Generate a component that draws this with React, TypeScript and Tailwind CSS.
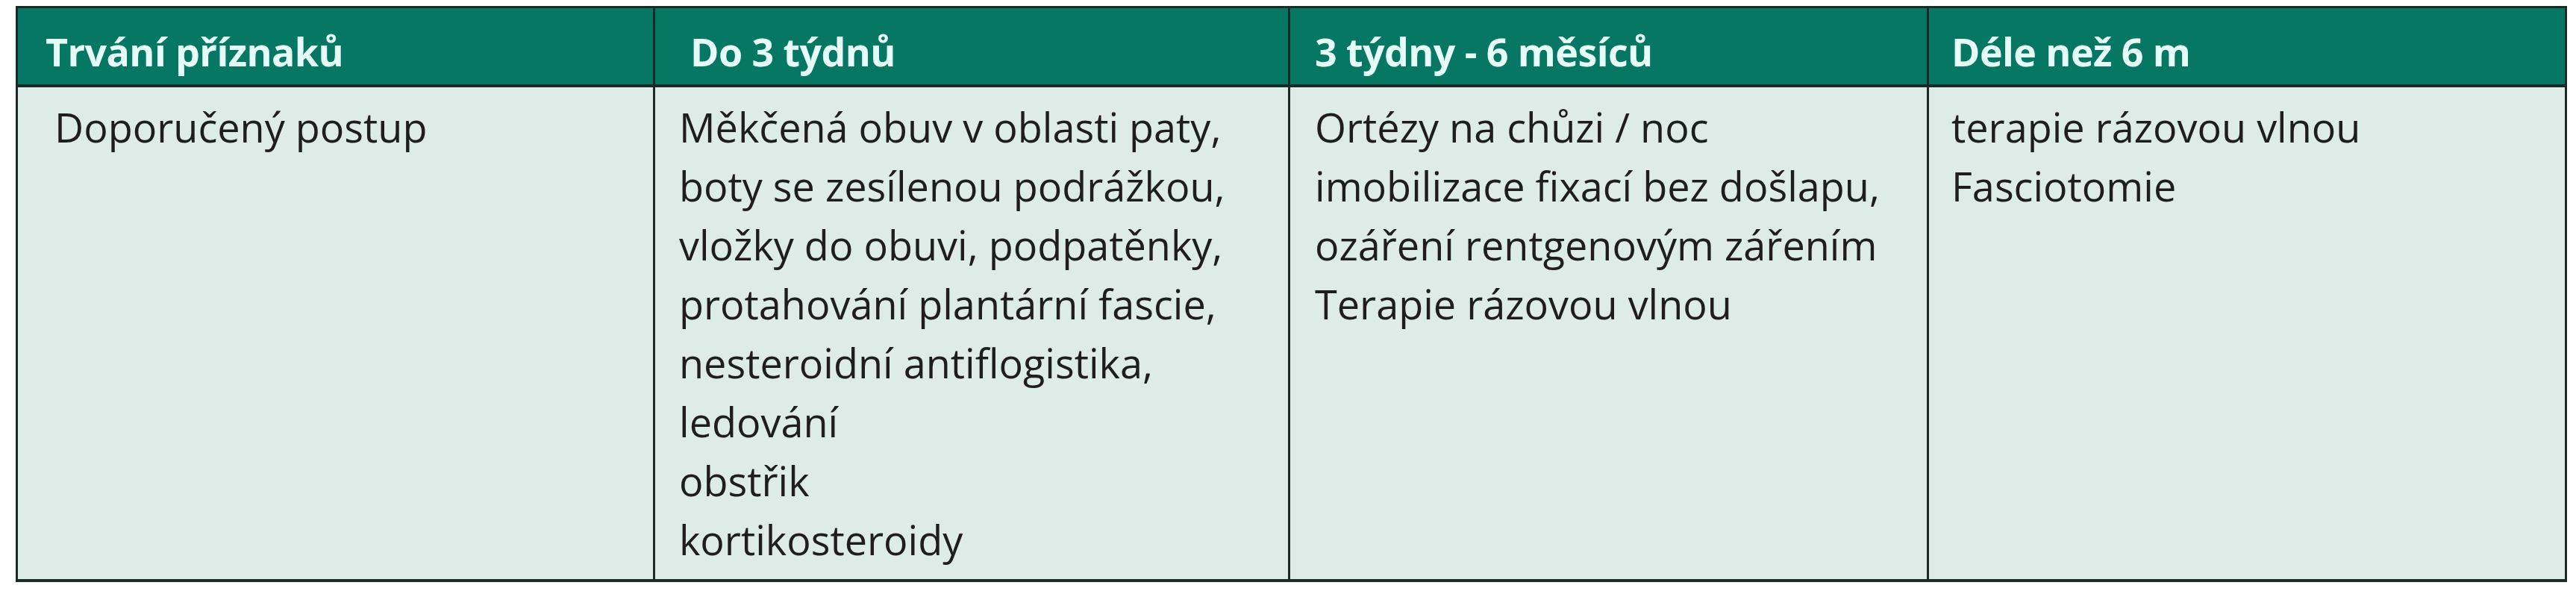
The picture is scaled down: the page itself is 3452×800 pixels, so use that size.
const columns = [
  {
    title: "Trvání příznaků",
    width: "w-[851px]",
    headPad: "pl-[37px]",
    bodyPad: "pl-[49px]",
    lines: ["Doporučený postup"],
  },
  {
    title: "Do 3 týdnů",
    width: "w-[851px]",
    headPad: "pl-[47px]",
    bodyPad: "pl-[32px]",
    lines: [
      "Měkčená obuv v oblasti paty,",
      "boty se zesílenou podrážkou,",
      "vložky do obuvi, podpatěnky,",
      "protahování plantární fascie,",
      "nesteroidní antiflogistika,",
      "ledování",
      "obstřik",
      "kortikosteroidy",
    ],
  },
  {
    title: "3 týdny - 6 měsíců",
    width: "w-[856px]",
    headPad: "pl-[33px]",
    bodyPad: "pl-[33px]",
    lines: [
      "Ortézy na chůzi / noc",
      "imobilizace fixací bez došlapu,",
      "ozáření rentgenovým zářením",
      "Terapie rázovou vlnou",
    ],
  },
  {
    title: "Déle než 6 m",
    width: "w-[855px]",
    headPad: "pl-[30px]",
    bodyPad: "pl-[30px]",
    lines: ["terapie rázovou vlnou", "Fasciotomie"],
  },
];

export default function App() {
  return (
    <div className="h-[800px] w-[3452px] bg-white pl-[21px] pt-[8px] font-['Open_Sans',sans-serif]">
      <div className="w-[3419px] border-[3px] border-b-4 border-[#1b2a26]">
        <div className="flex h-[106px] border-b-4 border-[#1b2a26] bg-[#067763]">
          {columns.map((col, i) => (
            <div
              key={col.title}
              className={`${col.width} ${col.headPad} ${i > 0 ? "border-l-[3px] border-[#1b2a26]" : ""} pt-[23px] text-[52px] leading-[70px] font-bold tracking-[-0.6px] whitespace-nowrap text-[#e6fdf7]`}
            >
              {col.title}
            </div>
          ))}
        </div>
        <div className="flex h-[659px] bg-[#deece7]">
          {columns.map((col, i) => (
            <div
              key={col.title}
              className={`${col.width} ${col.bodyPad} ${i > 0 ? "border-l-[3px] border-[#1b2a26]" : ""} pt-[14px] text-[54px] leading-[79px] whitespace-nowrap text-[#1e1e1e]`}
            >
              {col.lines.map((line) => (
                <div key={line}>{line}</div>
              ))}
            </div>
          ))}
        </div>
      </div>
    </div>
  );
}
